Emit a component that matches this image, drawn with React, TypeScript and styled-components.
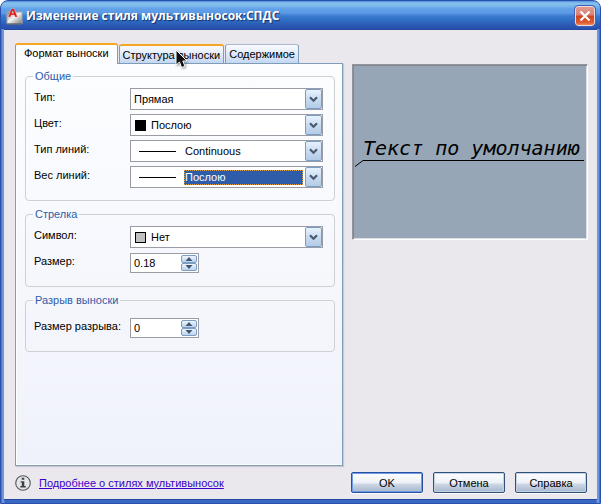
import React, { useId, useRef, useState } from "react";
import styled, { createGlobalStyle, css } from "styled-components";

const GlobalStyle = createGlobalStyle`
  *, *::before, *::after { box-sizing: border-box; }
  body { margin: 0; background: #fff; }
  body, button, input, select {
    font-family: "Liberation Sans", Arial, sans-serif;
    font-size: 11px;
    line-height: 14px;
    color: #000;
  }
`;

const Window = styled.main`
  position: relative;
  display: flex;
  flex-direction: column;
  min-height: 100vh;
  padding: 0 3px 3px;
  border: 1px solid #2a4fae;
  border-radius: 8px 8px 0 0;
  background: linear-gradient(90deg, #3564bd 0, #7fa8e6 2px, #3868c4 4px, #3868c4 calc(100% - 4px), #7fa8e6 calc(100% - 2px), #3564bd 100%);
  overflow: hidden;
`;

const TitleBar = styled.header`
  display: flex;
  align-items: center;
  gap: 3px;
  height: 28px;
  margin: 0 -3px;
  padding: 2px 5px 0;
  background: linear-gradient(180deg, #4f8edc 0, #86c0ee 2px, #7db9ec 5px, #62a0e8 8px, #5c9ae4 12px, #3a7bd0 15px, #3070c4 19px, #2a59b4 24px, #2850ac 100%);
`;

const Title = styled.h1`
  flex: 1;
  margin: 0;
  font-family: "Open Sans", "Noto Sans", sans-serif;
  font-size: 12px;
  line-height: 18px;
  font-weight: 700;
  color: #fff;
  text-shadow: 1px 1px 1px #12306e;
  white-space: nowrap;
`;

const CloseButton = styled.button`
  display: grid;
  place-items: center;
  width: 20px;
  height: 20px;
  padding: 0;
  border: 1px solid #f3d9d6;
  border-radius: 3px;
  outline: 1px solid #3a62bd;
  outline-offset: 0;
  background: linear-gradient(180deg, #e09a90 0, #d98075 45%, #cc4422 50%, #dd5a30 85%, #e88a60 100%);
`;

const Body = styled.div`
  display: flex;
  flex: 1;
  flex-direction: column;
  padding: 13px 9px 6px 11px;
  border: solid #2447a0;
  border-width: 1px 0;
  background: #ebe8ed;
`;

const Columns = styled.div`
  display: grid;
  flex: 1;
  grid-template-columns: minmax(0, 328fr) minmax(0, 236fr);
  gap: 9px;
`;

const TabArea = styled.section`
  display: flex;
  flex-direction: column;
`;

const TabList = styled.div`
  display: flex;
  align-items: flex-end;
  gap: 1px;
`;

const Tab = styled.button<{ $active: boolean; $hot: boolean }>`
  height: 19px;
  padding: 0 3px;
  border: 1px solid #7f9db9;
  border-top: ${(p) => (p.$hot ? "2px solid #f5a623" : "1px solid #a9b8cc")};
  border-bottom: 0;
  border-radius: 3px 3px 0 0;
  background: linear-gradient(180deg, #f8fafe 0, #e6eefa 40%, #c3d7f2 100%);
  white-space: nowrap;

  ${(p) =>
    p.$active &&
    css`
      position: relative;
      z-index: 1;
      height: 21px;
      margin-bottom: -1px;
      padding: 0 8px 3px;
      background: #fcfdfe;
    `}
`;

const TabPanel = styled.div`
  display: flex;
  flex: 1;
  flex-direction: column;
  gap: 6px;
  padding: 5px 7px 9px 9px;
  border: 1px solid #7f9db9;
  box-shadow: 1px 1px 1px #c9c9d2, inset 1px -1px 0 #fff;
  background: linear-gradient(180deg, #fcfdfe 0, #f9fafe 30%, #f0f2fb 100%);
`;

const Group = styled.fieldset<{ $roomy?: boolean }>`
  min-width: 0;
  margin: 0;
  padding: ${(p) => (p.$roomy ? "10px 11px 12px 8px" : "5px 11px 12px 8px")};
  border: 1px solid #cfd0d2;
  border-radius: 4px;
`;

const Legend = styled.legend`
  margin-left: -1px;
  padding: 0 2px;
  height: 14px;
  color: #2f5ca8;
`;

const Rows = styled.div`
  display: grid;
  gap: 4px;
`;

const Row = styled.div`
  display: grid;
  grid-template-columns: 96px minmax(0, 1fr);
  align-items: center;
  min-height: 22px;
`;

const Label = styled.label`
  padding-bottom: 5px;
  white-space: nowrap;
`;

const ComboFrame = styled.div`
  display: flex;
  align-items: center;
  height: 22px;
  padding-left: 2px;
  border: 1px solid #9a9ca3;
  background: #fff;
`;

const Picker = styled.select<{ $selected?: boolean }>`
  flex: 1;
  min-width: 0;
  height: 15px;
  margin-right: 2px;
  padding: 0 1px;
  appearance: none;
  border: 0;
  border-radius: 0;
  outline: ${(p) => (p.$selected ? "1px dotted #e0a040" : "none")};
  outline-offset: -1px;
  background: ${(p) => (p.$selected ? "#2f5ca8" : "transparent")};
  color: ${(p) => (p.$selected ? "#fff" : "#000")};
`;

const ArrowButton = styled.button`
  display: grid;
  place-items: center;
  align-self: stretch;
  width: 17px;
  padding: 0;
  border: 1px solid #7b9cc4;
  border-radius: 2px;
  background: linear-gradient(180deg, #e8f2fd 0, #c8dcf2 50%, #b4cbe6 100%);
`;

const Swatch = styled.span<{ $color: string }>`
  flex: none;
  width: 11px;
  height: 11px;
  margin: 0 4px 0 2px;
  border: 1px solid #000;
  background: ${(p) => p.$color};
`;

const LineSample = styled.span`
  flex: none;
  width: 37px;
  height: 1px;
  margin: 0 8px 0 6px;
  background: #000;
`;

const SpinFrame = styled.div`
  display: flex;
  width: 69px;
  height: 20px;
  padding: 1px;
  border: 1px solid #9a9ca3;
  background: #fff;
`;

const SpinInput = styled.input`
  flex: 1;
  min-width: 0;
  padding: 0 2px;
  border: 0;
  outline: 0;
  background: transparent;
`;

const SpinButtons = styled.div`
  display: grid;
  grid-template-rows: 1fr 1fr;
  width: 16px;
`;

const SpinButton = styled.button`
  display: grid;
  place-items: center;
  min-height: 0;
  padding: 0;
  border: 1px solid #7b9cc4;
  border-radius: 2px;
  background: linear-gradient(180deg, #eef5fd, #bcd2ec);
`;

const Preview = styled.figure`
  align-self: start;
  min-height: 176px;
  margin: 21px 0 0;
  padding: 71px 1px 0 2px;
  border: 1px solid;
  border-color: #94949a #fff #fff #94949a;
  box-shadow: inset 1px 1px 0 #82868e, inset -1px -1px 0 #dcdfe4;
  background: #96a6b6;
  overflow: hidden;
`;

const PreviewText = styled.figcaption`
  padding-left: 8px;
  font-family: "DejaVu Sans Mono", monospace;
  font-size: 20px;
  font-style: italic;
  line-height: 24px;
  white-space: nowrap;
`;

const Leader = styled.div`
  display: flex;
`;

const LeaderLine = styled.div`
  flex: 1;
  height: 1px;
  margin-right: 2px;
  background: #000;
`;

const LeaderTail = styled.svg`
  flex: none;
  display: block;
`;

const Footer = styled.footer`
  display: flex;
  align-items: center;
  gap: 10px;
  margin-top: 6px;
  padding-right: 1px;
`;

const HelpLink = styled.a`
  display: flex;
  flex: 1;
  align-items: center;
  gap: 8px;
  color: #3a00c8;
  white-space: nowrap;
`;

const PushButton = styled.button<{ $primary?: boolean }>`
  width: 72px;
  height: 21px;
  padding: 0;
  border: 1px solid ${(p) => (p.$primary ? "#2850a0" : "#2f5078")};
  border-radius: 2px;
  box-shadow: ${(p) =>
    p.$primary ? "inset 0 0 0 1px #6f9ce6, 0 1px 0 #fff" : "inset 0 0 0 1px #c4d3e4, 0 1px 0 #fff"};
  background: linear-gradient(180deg, #fbfcfe 0, #eef2f8 50%, #ccd6e4 60%, #a6b6cc 100%);
`;

const Pointer = styled.svg`
  position: absolute;
  top: 48px;
  left: 173px;
  z-index: 2;
  pointer-events: none;
  filter: drop-shadow(1px 1px 1px rgba(0, 0, 0, 0.4));
`;

function AppIcon() {
  return (
    <svg width="17" height="17" viewBox="0 0 17 17" aria-hidden="true">
      <defs>
        <linearGradient id="case" x1="0" y1="0" x2="1" y2="1">
          <stop offset="0" stopColor="#777" />
          <stop offset=".45" stopColor="#f4f4f4" />
          <stop offset="1" stopColor="#777" />
        </linearGradient>
      </defs>
      <path d="M1 4h15v12H1z" fill="url(#case)" stroke="#aaa" />
      <path d="M1 16h15" stroke="#4c4c55" />
      <path d="M2 9 5.500.5h2.500L11.500 9H9l-.8-2H5.200l-.8 2zM5.800 5.300h1.800L6.700 2.700z" fill="#e01818" stroke="#fff" strokeWidth=".3" />
    </svg>
  );
}

function InfoIcon() {
  return (
    <svg width="16" height="16" viewBox="0 0 16 16" aria-hidden="true">
      <circle cx="8" cy="8" r="7.300" fill="#e4e5e8" stroke="#55585e" strokeWidth="1.100" />
      <path d="M6.700 2.800h2.600v2H6.700zM5.500 6.200h3.800v4.800h1.500v1.500H5.300V11h1.500V7.600H5.500z" fill="#3c4046" />
    </svg>
  );
}

function Chevron() {
  return (
    <svg width="9" height="7" viewBox="0 0 9 7" aria-hidden="true">
      <path d="M1 1.300 4.500 4.800 8 1.300" fill="none" stroke="#4a5a72" strokeWidth="2.200" />
    </svg>
  );
}

interface ComboProps {
  label: string;
  options: string[];
  sample?: React.ReactNode;
  selected?: boolean;
}

function Combo({ label, options, sample, selected }: ComboProps) {
  const id = useId();
  const picker = useRef<HTMLSelectElement>(null);
  return (
    <Row>
      <Label htmlFor={id}>{label}</Label>
      <ComboFrame>
        {sample}
        <Picker id={id} ref={picker} $selected={selected}>
          {options.map((o) => (
            <option key={o}>{o}</option>
          ))}
        </Picker>
        <ArrowButton type="button" tabIndex={-1} aria-label={label} onClick={() => picker.current?.showPicker()}>
          <Chevron />
        </ArrowButton>
      </ComboFrame>
    </Row>
  );
}

function Spinner({ label, initial, step }: { label: string; initial: number; step: number }) {
  const id = useId();
  const [value, setValue] = useState(String(initial));
  const change = (d: number) => setValue(String(Math.max(0, Math.round((Number(value) + d) * 100) / 100)));
  return (
    <Row>
      <Label htmlFor={id}>{label}</Label>
      <SpinFrame>
        <SpinInput id={id} value={value} onChange={(e) => setValue(e.target.value)} />
        <SpinButtons>
          <SpinButton type="button" aria-label="+" onClick={() => change(step)}>
            <svg width="8" height="4" viewBox="0 0 8 4" aria-hidden="true">
              <path d="M4 0 7.500 4h-7z" fill="#44556e" />
            </svg>
          </SpinButton>
          <SpinButton type="button" aria-label="−" onClick={() => change(-step)}>
            <svg width="8" height="4" viewBox="0 0 8 4" aria-hidden="true">
              <path d="M4 4 7.500 0h-7z" fill="#44556e" />
            </svg>
          </SpinButton>
        </SpinButtons>
      </SpinFrame>
    </Row>
  );
}

const tabs = ["Формат выноски", "Структура выноски", "Содержимое"];

export default function App() {
  return (
    <>
      <GlobalStyle />
      <Window>
        <TitleBar>
          <AppIcon />
          <Title>Изменение стиля мультивыносок:СПДС</Title>
          <CloseButton type="button" aria-label="Закрыть">
            <svg width="12" height="12" viewBox="0 0 12 12" aria-hidden="true">
              <path d="M1.500 1.500l9 9M10.500 1.500l-9 9" stroke="#fff" strokeWidth="2.200" />
            </svg>
          </CloseButton>
        </TitleBar>
        <Body>
          <Columns>
            <TabArea>
              <TabList role="tablist">
                {tabs.map((t, i) => (
                  <Tab key={t} type="button" role="tab" aria-selected={i === 0} $active={i === 0} $hot={i < 2}>
                    {t}
                  </Tab>
                ))}
              </TabList>
              <TabPanel role="tabpanel">
                <Group>
                  <Legend>Общие</Legend>
                  <Rows>
                    <Combo label="Тип:" options={["Прямая"]} />
                    <Combo label="Цвет:" options={["Послою"]} sample={<Swatch $color="#000" />} />
                    <Combo label="Тип линий:" options={["Continuous"]} sample={<LineSample />} />
                    <Combo label="Вес линий:" options={["Послою"]} sample={<LineSample />} selected />
                  </Rows>
                </Group>
                <Group>
                  <Legend>Стрелка</Legend>
                  <Rows>
                    <Combo label="Символ:" options={["Нет"]} sample={<Swatch $color="#c0c0c0" />} />
                    <Spinner label="Размер:" initial={0.18} step={0.01} />
                  </Rows>
                </Group>
                <Group $roomy>
                  <Legend>Разрыв выноски</Legend>
                  <Rows>
                    <Spinner label="Размер разрыва:" initial={0} step={0.01} />
                  </Rows>
                </Group>
              </TabPanel>
            </TabArea>
            <Preview>
              <PreviewText>Текст по умолчанию</PreviewText>
              <Leader>
                <LeaderTail width="8" height="7" viewBox="0 0 8 7" aria-hidden="true">
                  <path d="M0 6.500 8 .5" stroke="#000" fill="none" />
                </LeaderTail>
                <LeaderLine />
              </Leader>
            </Preview>
          </Columns>
          <Footer>
            <HelpLink href="#help">
              <InfoIcon />
              Подробнее о стилях мультивыносок
            </HelpLink>
            <PushButton type="button" $primary>
              OK
            </PushButton>
            <PushButton type="button">Отмена</PushButton>
            <PushButton type="button">Справка</PushButton>
          </Footer>
        </Body>
        <Pointer width="16" height="20" viewBox="0 0 16 20" aria-hidden="true">
          <path d="M2 1v15l3.500-3 2 5.500 3.500-1.300-2.200-5.200H13z" fill="#101010" stroke="#fff" strokeWidth="1" />
        </Pointer>
      </Window>
    </>
  );
}
